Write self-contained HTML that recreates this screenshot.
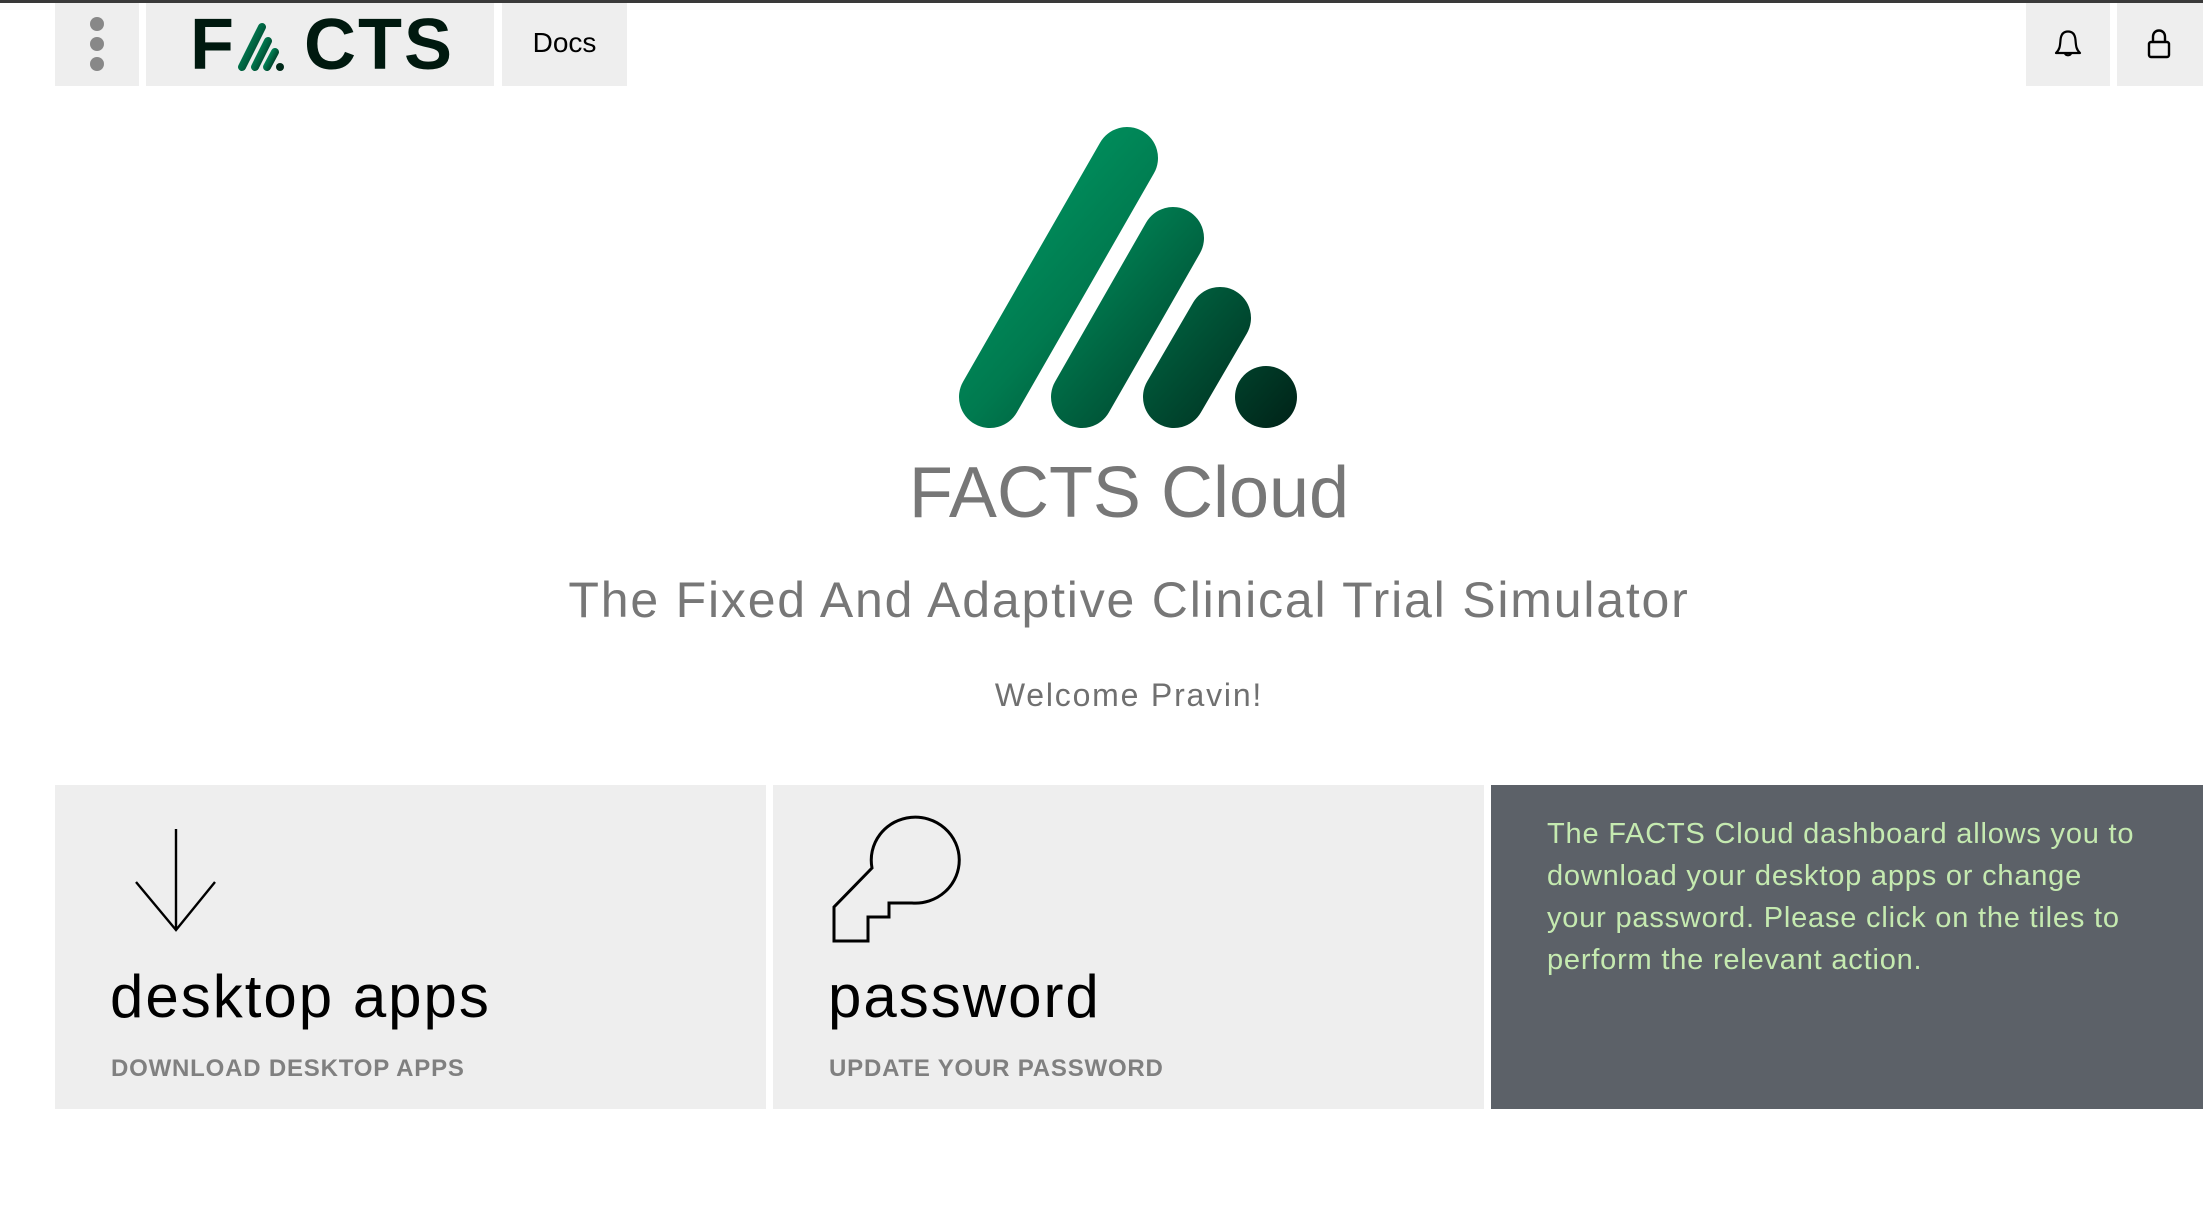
<!DOCTYPE html>
<html><head><meta charset="utf-8"><style>
*{margin:0;padding:0;box-sizing:border-box}
body{width:2203px;height:1210px;background:#fff;position:relative;overflow:hidden;font-family:"Liberation Sans",sans-serif}
.a{position:absolute}
.t{background:#eeeeee}
.c{text-align:center;left:55px;width:2148px;color:#777;white-space:nowrap}
</style></head><body>
<div class="a" style="left:0;top:0;width:2203px;height:3px;background:#3a3a3a"></div>
<div class="a t" style="left:55px;top:3px;width:84px;height:83px"></div>
<div class="a" style="left:90px;top:17px;width:14px;height:14px;border-radius:50%;background:#888"></div>
<div class="a" style="left:90px;top:37px;width:14px;height:14px;border-radius:50%;background:#888"></div>
<div class="a" style="left:90px;top:57px;width:14px;height:14px;border-radius:50%;background:#888"></div>
<div class="a t" style="left:146px;top:3px;width:348px;height:83px"></div>
<div class="a" style="left:190px;top:5px;font-size:72px;line-height:80px;color:#00190f;font-weight:bold;letter-spacing:1px">F</div>
<svg class="a" style="left:236px;top:20px" width="62" height="54" viewBox="0 0 62 54">
<defs><linearGradient id="g1" x1="0" y1="0" x2="1" y2="1"><stop offset="0" stop-color="#00a06a"/><stop offset="1" stop-color="#002a1a"/></linearGradient></defs>
<g stroke="url(#g1)" stroke-linecap="round" stroke-width="8" fill="none"><line x1="6" y1="47" x2="26" y2="7"/><line x1="19" y1="47" x2="32" y2="21"/><line x1="31" y1="47" x2="39" y2="32"/></g>
<circle cx="44" cy="47" r="4" fill="#002a1a"/></svg>
<div class="a" style="left:304px;top:5px;font-size:72px;line-height:80px;color:#00190f;font-weight:bold;letter-spacing:2px">CTS</div>
<div class="a t" style="left:502px;top:3px;width:125px;height:83px"></div>
<div class="a" style="left:502px;top:27px;width:125px;text-align:center;font-size:28px;color:#000">Docs</div>
<div class="a t" style="left:2026px;top:3px;width:84px;height:83px"></div>
<svg class="a" style="left:2052px;top:28px" width="32" height="32" viewBox="0 0 32 32" fill="none" stroke="#000" stroke-width="2.2" stroke-linejoin="round"><path d="M4 25 C8 21 8 18 8.5 12 C9 6 12 3.5 16 3.5 C20 3.5 23 6 23.5 12 C24 18 24 21 28 25 Z"/><path d="M13 25 C13 28 19 28 19 25"/></svg>
<div class="a t" style="left:2117px;top:3px;width:86px;height:83px"></div>
<svg class="a" style="left:2145px;top:28px" width="30" height="32" viewBox="0 0 30 32" fill="none" stroke="#000" stroke-width="2.4" stroke-linejoin="round"><rect x="4" y="14" width="20" height="15" rx="2"/><path d="M8 14 V9 C8 5 10.5 2.5 14 2.5 C17.5 2.5 20 5 20 9 V14"/></svg>

<svg class="a" style="left:940px;top:110px" width="360" height="330" viewBox="940 110 360 330">
<defs><linearGradient id="g" gradientUnits="userSpaceOnUse" x1="960" y1="130" x2="1290" y2="420"><stop offset="0" stop-color="#00a068"/><stop offset="0.45" stop-color="#007a4f"/><stop offset="1" stop-color="#00261a"/></linearGradient></defs>
<g stroke="url(#g)" stroke-linecap="round" stroke-width="62" fill="none">
<line x1="990" y1="397" x2="1127" y2="158"/>
<line x1="1082" y1="397" x2="1173" y2="238"/>
<line x1="1174" y1="397" x2="1220" y2="318"/>
</g>
<circle cx="1266" cy="397" r="31" fill="url(#g)"/>
</svg>

<div class="a c" style="top:448px;font-size:72px;line-height:90px">FACTS Cloud</div>
<div class="a c" style="top:570px;font-size:50px;line-height:60px;letter-spacing:1.8px">The Fixed And Adaptive Clinical Trial Simulator</div>
<div class="a c" style="top:676px;font-size:32px;line-height:38px;color:#707070;letter-spacing:1.8px">Welcome Pravin!</div>

<div class="a t" style="left:55px;top:785px;width:711px;height:324px"></div>
<svg class="a" style="left:130px;top:825px" width="92" height="110" viewBox="130 825 92 110" fill="none" stroke="#000" stroke-width="2.4"><path d="M176 829 V930 M136 882 L176 930 L215 882"/></svg>
<div class="a" style="left:110px;top:962px;font-size:60px;line-height:70px;color:#000;letter-spacing:2px">desktop apps</div>
<div class="a" style="left:111px;top:1054px;font-size:24px;line-height:30px;color:#808080;font-weight:bold;letter-spacing:0.8px">DOWNLOAD DESKTOP APPS</div>

<div class="a t" style="left:773px;top:785px;width:711px;height:324px"></div>
<svg class="a" style="left:825px;top:810px" width="140" height="140" viewBox="825 810 140 140" fill="none" stroke="#000" stroke-width="3" stroke-linejoin="miter"><path d="M872 868 L834 907 V941 H868 V917 H889 V903 H912 A44 43 0 1 0 872 868 Z"/></svg>
<div class="a" style="left:828px;top:962px;font-size:60px;line-height:70px;color:#000;letter-spacing:2px">password</div>
<div class="a" style="left:829px;top:1054px;font-size:24px;line-height:30px;color:#808080;font-weight:bold;letter-spacing:0.8px">UPDATE YOUR PASSWORD</div>

<div class="a" style="left:1491px;top:785px;width:712px;height:324px;background:#5c6168"></div>
<div class="a" style="left:1547px;top:813px;font-size:29px;line-height:42px;color:#c5eab0;white-space:nowrap;letter-spacing:0.8px">The FACTS Cloud dashboard allows you to<br>download your desktop apps or change<br>your password. Please click on the tiles to<br>perform the relevant action.</div>
</body></html>
